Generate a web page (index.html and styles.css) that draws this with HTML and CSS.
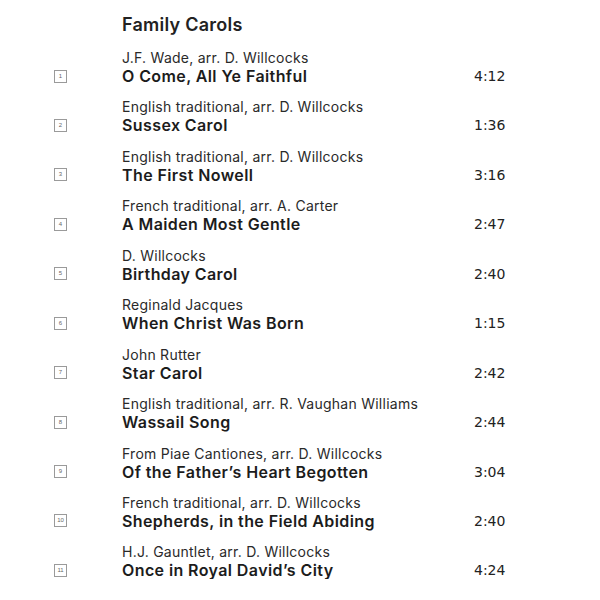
FILE: index.html
```html
<!DOCTYPE html>
<html lang="en">
<head>
<meta charset="utf-8">
<title>Family Carols</title>
<link rel="stylesheet" href="styles.css">
</head>
<body>
<main class="page">
  <h1 class="heading">Family Carols</h1>
  <ol class="tracks">
    <li class="track"><span class="num">1</span><span class="composer">J.F. Wade, arr. D. Willcocks</span><span class="title">O Come, All Ye Faithful</span><span class="time">4:12</span></li>
    <li class="track"><span class="num">2</span><span class="composer">English traditional, arr. D. Willcocks</span><span class="title">Sussex Carol</span><span class="time">1:36</span></li>
    <li class="track"><span class="num">3</span><span class="composer">English traditional, arr. D. Willcocks</span><span class="title">The First Nowell</span><span class="time">3:16</span></li>
    <li class="track"><span class="num">4</span><span class="composer">French traditional, arr. A. Carter</span><span class="title">A Maiden Most Gentle</span><span class="time">2:47</span></li>
    <li class="track"><span class="num">5</span><span class="composer">D. Willcocks</span><span class="title">Birthday Carol</span><span class="time">2:40</span></li>
    <li class="track"><span class="num">6</span><span class="composer">Reginald Jacques</span><span class="title">When Christ Was Born</span><span class="time">1:15</span></li>
    <li class="track"><span class="num">7</span><span class="composer">John Rutter</span><span class="title">Star Carol</span><span class="time">2:42</span></li>
    <li class="track"><span class="num">8</span><span class="composer">English traditional, arr. R. Vaughan Williams</span><span class="title">Wassail Song</span><span class="time">2:44</span></li>
    <li class="track"><span class="num">9</span><span class="composer">From Piae Cantiones, arr. D. Willcocks</span><span class="title">Of the Father’s Heart Begotten</span><span class="time">3:04</span></li>
    <li class="track"><span class="num">10</span><span class="composer">French traditional, arr. D. Willcocks</span><span class="title">Shepherds, in the Field Abiding</span><span class="time">2:40</span></li>
    <li class="track"><span class="num">11</span><span class="composer">H.J. Gauntlet, arr. D. Willcocks</span><span class="title">Once in Royal David’s City</span><span class="time">4:24</span></li>
  </ol>
</main>
</body>
</html>
```
FILE: styles.css
```css
html, body {
  margin: 0;
  background: #ffffff;
}
body {
  font-family: Inter, "Noto Sans", sans-serif;
  color: #1f1f1f;
}
.page {
  padding: 13px 0 0 122px;
}
.heading {
  margin: 0;
  font-size: 18px;
  line-height: 24px;
  font-weight: 600;
  letter-spacing: 0.25px;
  color: #222;
}
.tracks {
  list-style: none;
  margin: 11px 0 0 -122px;
  padding: 0;
  display: flex;
  flex-direction: column;
  gap: 12.44px;
}
.track {
  display: grid;
  grid-template-columns: 54px 68px 352px 60px;
  grid-template-rows: 19px 18px;
}
.composer {
  grid-column: 3;
  grid-row: 1;
  font-size: 14px;
  line-height: 19px;
  letter-spacing: 0.25px;
  color: #2a2a2a;
}
.title {
  grid-column: 3;
  grid-row: 2;
  font-size: 16px;
  line-height: 18px;
  font-weight: 600;
  letter-spacing: 0.4px;
  color: #1c1c1c;
}
.num {
  grid-column: 2;
  grid-row: 2;
  align-self: center;
  width: 11px;
  height: 11px;
  border: 1px solid #9a9a9a;
  font-family: "Liberation Sans", sans-serif;
  font-size: 6px;
  line-height: 11px;
  text-align: center;
  color: #666;
}
.time {
  grid-column: 4;
  grid-row: 2;
  font-family: "DejaVu Sans", Verdana, sans-serif;
  font-size: 14px;
  line-height: 18px;
  color: #222;
}
```
